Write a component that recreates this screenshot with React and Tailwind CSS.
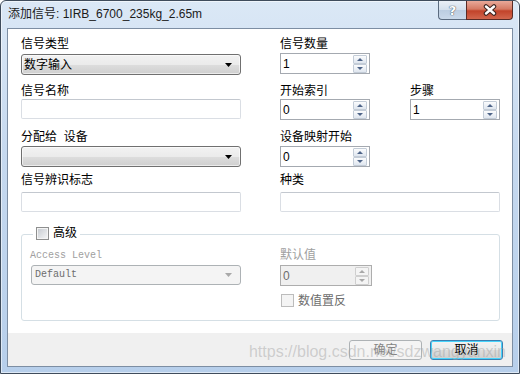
import React from "react";

const cjk = "font-['Liberation_Sans','Noto_Sans_CJK_SC',sans-serif]";

function Label({ children, muted, className = "" }) {
  return (
    <div
      className={`h-[16px] text-[12px] leading-[16px] whitespace-nowrap ${
        muted ? "text-[#a0a0a0]" : "text-[#000]"
      } ${className}`}
    >
      {children}
    </div>
  );
}

function Combo({ text, disabled, className = "" }) {
  if (disabled) {
    return (
      <div
        className={`flex h-[20px] items-center justify-between rounded-[3px] border border-[#adb2b5] bg-[#f4f4f4] pr-[8px] pl-[3px] ${className}`}
      >
        <span className="font-['Liberation_Mono',monospace] text-[10px] leading-none text-[#6d6d6d]">
          {text}
        </span>
        <svg width="7" height="4" viewBox="0 0 7 4">
          <path d="M0 0h7L3.5 4z" fill="#a9a9a9" />
        </svg>
      </div>
    );
  }
  return (
    <div
      className={`flex h-[21px] items-center justify-between rounded-[3px] border border-[#707070] bg-[linear-gradient(to_bottom,#f2f2f2_0%,#ebebeb_50%,#dddddd_51%,#cfcfcf_100%)] pr-[8px] pl-[2px] shadow-[inset_0_0_0_1px_rgba(255,255,255,0.6)] ${className}`}
    >
      <span className="text-[12px] leading-none text-black">{text}</span>
      <svg width="7" height="4" viewBox="0 0 7 4">
        <path d="M0 0h7L3.5 4z" fill="#000" />
      </svg>
    </div>
  );
}

function TextBox({ className = "" }) {
  return (
    <div
      className={`h-[20px] rounded-[2px] border border-[#dadee4] border-t-[#c3c8cf] bg-white ${className}`}
    />
  );
}

function SpinBtn({ up, disabled }) {
  return (
    <div
      className={`flex h-[9px] w-[14px] items-center justify-center rounded-[1px] border ${
        disabled
          ? "border-[#cfcfcf] bg-[#f4f4f4]"
          : "border-[#c3ccd7] bg-[linear-gradient(to_bottom,#fbfcfd,#dfe6ef)]"
      }`}
    >
      <svg width="6" height="3" viewBox="0 0 6 3">
        <path
          d={up ? "M3 0L6 3H0z" : "M0 0h6L3 3z"}
          fill={disabled ? "#a8a8a8" : "#4e6488"}
        />
      </svg>
    </div>
  );
}

function Spin({ value, disabled, className = "" }) {
  return (
    <div
      className={`flex h-[21px] items-center border ${
        disabled
          ? "border-[#adadad] bg-[#f0f0f0] text-[#6d6d6d]"
          : "border-[#a4a9b0] bg-white text-black"
      } ${className}`}
    >
      <span className="flex-1 pl-[2px] text-[12px] leading-none">{value}</span>
      <div className="mr-[2px] flex flex-col">
        <SpinBtn up disabled={disabled} />
        <SpinBtn disabled={disabled} />
      </div>
    </div>
  );
}

function Check({ disabled }) {
  return (
    <div
      className={`h-[13px] w-[13px] border ${
        disabled
          ? "border-[#bcbcbc] bg-[#f4f4f4]"
          : "border-[#8e8f8f] bg-[linear-gradient(135deg,#c4c8ce,#f6f7f8)] shadow-[inset_0_0_0_1px_#f4f4f4]"
      }`}
    />
  );
}

function Button({ children, primary, disabled }) {
  if (disabled) {
    return (
      <div className="flex h-[20px] w-[73px] items-center justify-center rounded-[3px] border border-[#adb2b5] bg-[#f4f4f4] text-[12px] text-[#838383]">
        {children}
      </div>
    );
  }
  return (
    <div
      className={`flex h-[20px] w-[73px] items-center justify-center rounded-[3px] border bg-[linear-gradient(to_bottom,#f2f2f2_0%,#ebebeb_50%,#dddddd_51%,#cfcfcf_100%)] text-[12px] text-black ${
        primary
          ? "border-[#3c7fb1] shadow-[inset_0_0_0_1px_#48d3fb]"
          : "border-[#707070]"
      }`}
    >
      {children}
    </div>
  );
}

export default function App() {
  return (
    <div
      className={`flex h-[374px] w-[520px] flex-col rounded-t-[6px] border border-[#3f4c5c] bg-[linear-gradient(to_bottom,#dbe8f6,#c6d9ef_40%,#b7cfeb)] shadow-[inset_0_0_0_1px_rgba(255,255,255,0.55)] ${cjk}`}
    >
      {/* title bar */}
      <div className="flex h-[27px] items-start justify-between pl-[7px]">
        <span className="mt-[6px] text-[12px] leading-[14px] text-[#1b1b1b]">
          添加信号: 1IRB_6700_235kg_2.65m
        </span>
        <div className="mr-[6px] flex">
          <div className="flex h-[19px] w-[28px] items-center justify-center rounded-bl-[4px] border border-t-0 border-r-0 border-[#5b6b7f] bg-[linear-gradient(to_bottom,#e9eff6,#d3dfec_50%,#bccde1_51%,#cad9ea)]">
            <span className="font-['DejaVu_Sans',sans-serif] text-[13px] leading-none font-bold text-white [text-shadow:0_0_1px_#3d4a5a,0_0_1px_#3d4a5a]">
              ?
            </span>
          </div>
          <div className="flex h-[19px] w-[47px] items-center justify-center rounded-br-[4px] border border-t-0 border-[#5a2b25] bg-[linear-gradient(to_bottom,#e9a999,#d57a64_45%,#c2432a_55%,#d2664d)]">
            <svg width="16" height="12" viewBox="0 0 16 12">
              <path
                d="M4 2.5L12 9.5M12 2.5L4 9.5"
                stroke="#3c2420"
                strokeWidth="4.5"
                strokeLinecap="round"
              />
              <path
                d="M4 2.5L12 9.5M12 2.5L4 9.5"
                stroke="#ffffff"
                strokeWidth="2.4"
                strokeLinecap="round"
              />
            </svg>
          </div>
        </div>
      </div>

      {/* client area */}
      <div className="relative mx-[6px] mb-[6px] flex flex-1 flex-col border border-[#7d8ea3]">
        <div className="flex flex-1 flex-col bg-white pt-[7px] pl-[13px]">
          {/* row 1 */}
          <div className="flex gap-[39px]">
            <div className="w-[220px]">
              <Label>信号类型</Label>
              <Combo text="数字输入" className="mt-[2px]" />
            </div>
            <div className="w-[90px]">
              <Label>信号数量</Label>
              <Spin value="1" className="mt-px" />
            </div>
          </div>

          {/* row 2 */}
          <div className="mt-[8px] flex gap-[39px]">
            <div className="w-[220px]">
              <Label>信号名称</Label>
              <TextBox />
            </div>
            <div className="flex gap-[40px]">
              <div className="w-[90px]">
                <Label>开始索引</Label>
                <Spin value="0" />
              </div>
              <div className="w-[90px]">
                <Label>步骤</Label>
                <Spin value="1" />
              </div>
            </div>
          </div>

          {/* row 3 */}
          <div className="mt-[9px] flex gap-[39px]">
            <div className="w-[220px]">
              <Label>分配给&nbsp;&nbsp;设备</Label>
              <Combo text="" className="mt-px" />
            </div>
            <div className="w-[90px]">
              <Label>设备映射开始</Label>
              <Spin value="0" className="mt-px" />
            </div>
          </div>

          {/* row 4 */}
          <div className="mt-[5px] flex gap-[39px]">
            <div className="w-[220px]">
              <Label>信号辨识标志</Label>
              <TextBox className="mt-[4px]" />
            </div>
            <div className="w-[220px]">
              <Label>种类</Label>
              <TextBox className="mt-[4px]" />
            </div>
          </div>

          {/* advanced group */}
          <div className="relative mt-[22px] mr-[12px] h-[87px] rounded-[3px] border border-[#d5dfe5]">
            <div className="absolute -top-[9px] left-[11px] flex h-[14px] items-center gap-[4px] bg-white px-[3px]">
              <Check />
              <span className="text-[12px] leading-none text-black">高级</span>
            </div>
            <div className="flex gap-[39px] pt-[13px] pl-[8px]">
              <div className="w-[211px]">
                <div className="h-[15px] font-['Liberation_Mono',monospace] text-[10px] leading-[15px] text-[#a0a0a0]">
                  Access Level
                </div>
                <Combo text="Default" disabled className="mt-[2px] ml-px" />
              </div>
              <div className="w-[92px]">
                <div className="h-[15px] text-[12px] leading-[15px] text-[#a0a0a0]">
                  默认值
                </div>
                <Spin value="0" disabled className="mt-[2px]" />
                <div className="mt-[7px] ml-px flex h-[15px] items-center gap-[4px] whitespace-nowrap">
                  <Check disabled />
                  <span className="text-[12px] leading-none text-[#6d6d6d]">数值置反</span>
                </div>
              </div>
            </div>
          </div>
        </div>

        {/* footer */}
        <div className="flex h-[33px] justify-end gap-[8px] bg-[#f0f0f0] pt-[7px] pr-[9px]">
          <Button disabled>确定</Button>
          <Button primary>取消</Button>
        </div>

        <span className="pointer-events-none absolute right-[6px] bottom-[5px] font-['Liberation_Sans',sans-serif] text-[16px] leading-[18px] text-[rgba(160,160,160,0.45)]">
          https://blog.csdn.net/sdzwangyanxin
        </span>
      </div>
    </div>
  );
}
